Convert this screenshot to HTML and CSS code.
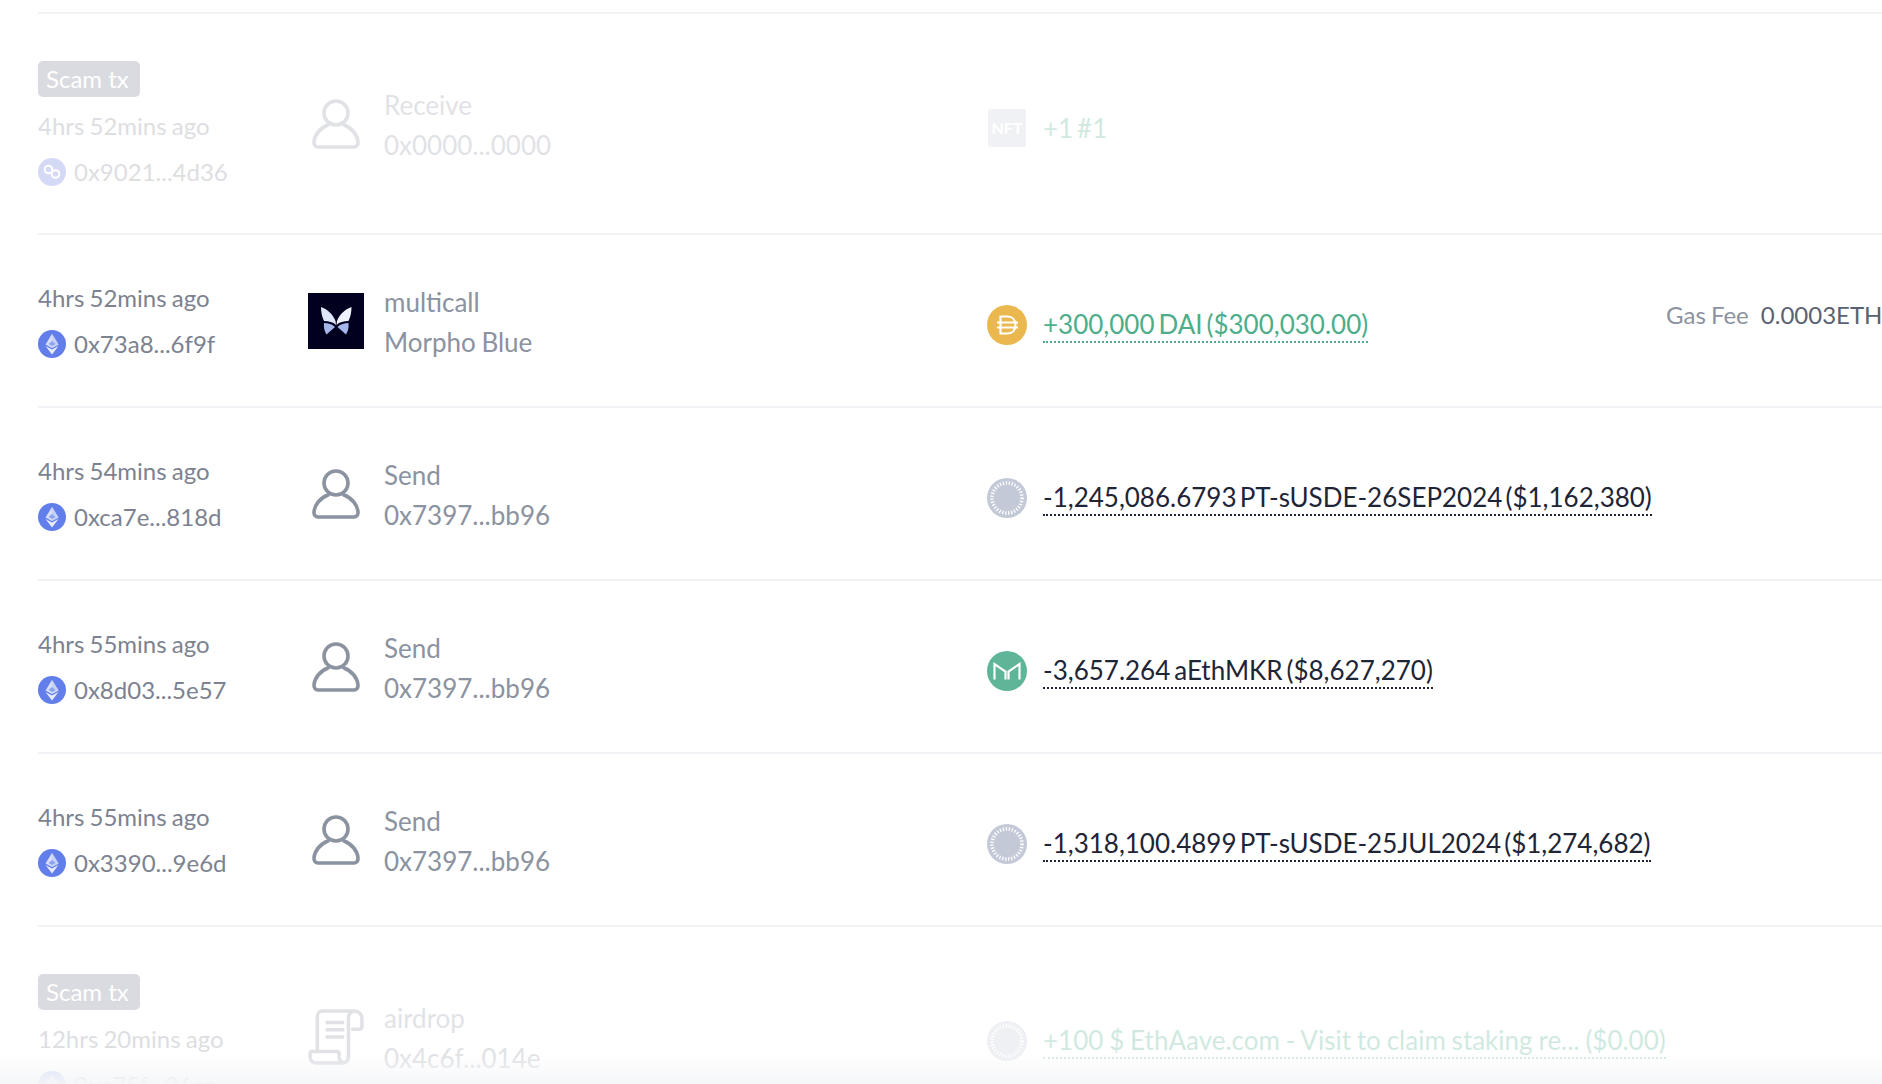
FILE: index.html
```html
<!DOCTYPE html>
<html lang="en">
<head>
<meta charset="utf-8">
<title>Transactions</title>
<link rel="stylesheet" href="styles.css">
</head>
<body>
<svg class="defs" width="0" height="0" aria-hidden="true">
  <symbol id="i-user" viewBox="0 0 48 50">
    <circle cx="24" cy="14" r="12" fill="none" stroke="currentColor" stroke-width="3.600"/>
    <path d="M16 26C8 29 2.500 36 2 43c-.2 3 1.500 5 4 5h36c2.500 0 4.200-2 4-5-.5-7-6-14-14-17" fill="none" stroke="currentColor" stroke-width="3.600" stroke-linecap="round"/>
  </symbol>
  <symbol id="i-scroll" viewBox="0 0 54 54">
    <path d="M9 41V7c0-3 2-5 5-5h31c4 0 7 3 7 7v8c0 1.500-1 2.500-2.500 2.500H43M43 2.500c-2.500 1-4 3-4 6V46c0 3.500-2.500 6-6 6H8c-3.500 0-6-2.500-6-6v-3c0-1.200 1-2 2-2h24c1.200 0 2 .8 2 2v2.500c0 3 1.500 5.500 4 6.500" fill="none" stroke="currentColor" stroke-width="3.400" stroke-linecap="round" stroke-linejoin="round"/>
    <path d="M17 13h18M17 20h18M17 27h18" stroke="currentColor" stroke-width="3.400"/>
  </symbol>
  <symbol id="i-eth" viewBox="0 0 28 28">
    <circle cx="14" cy="14" r="14" fill="#627eea"/>
    <path d="M14 4l-6.500 10.400L14 18l6.500-3.600z" fill="#fff" opacity=".75"/>
    <path d="M14 4v14l6.500-3.600z" fill="#c6d1f7"/>
    <path d="M14 19.600l-6.500-3.700L14 24.500l6.500-8.600z" fill="#fff" opacity=".85"/>
    <path d="M14 11l-3.500 3L14 16l3.500-2z" fill="#8ea3ee"/>
  </symbol>
  <symbol id="i-poly" viewBox="0 0 28 28">
    <circle cx="14" cy="14" r="14" fill="#5c6fe0"/>
    <circle cx="10.500" cy="11.500" r="3.800" fill="none" stroke="#fff" stroke-width="2"/>
    <circle cx="17.500" cy="16" r="3.800" fill="none" stroke="#fff" stroke-width="2"/>
  </symbol>
  <symbol id="i-dai" viewBox="0 0 40 40">
    <circle cx="20" cy="20" r="20" fill="#ebb84f"/>
    <path d="M13.500 11.500h7c5 0 8 3.500 8 8.500s-3 8.500-8 8.500h-7zM10 17.500h21M10 22.500h21" fill="none" stroke="#fff" stroke-width="2.200"/>
  </symbol>
  <symbol id="i-ring" viewBox="0 0 40 40">
    <circle cx="20" cy="20" r="20" fill="#c4c9d8"/>
    <circle cx="20" cy="20" r="15" fill="none" stroke="#fff" stroke-width="3.500" stroke-dasharray="1.300 1.700"/>
  </symbol>
  <symbol id="i-mkr" viewBox="0 0 40 40">
    <circle cx="20" cy="20" r="20" fill="#5fb597"/>
    <path d="M7.500 28.500V13L18.500 20.500V28.500M32.500 28.500V13L21.500 20.500V28.500" fill="none" stroke="#fff" stroke-width="2.200"/>
  </symbol>
</svg>

<main class="list">
  <section class="row scam">
    <div class="when">
      <span class="badge">Scam tx</span>
      <div class="faded"><div class="time">4hrs 52mins ago</div>
      <div class="hash"><svg class="chain"><use href="#i-poly"/></svg>0x9021...4d36</div></div>
    </div>
    <div class="action faded">
      <svg class="user"><use href="#i-user"/></svg>
      <div class="lines"><div>Receive</div><div>0x0000...0000</div></div>
    </div>
    <div class="change faded">
      <span class="nft">NFT</span>
      <span class="gain">+1 #1</span>
    </div>
  </section>

  <section class="row">
    <div class="when">
      <div class="time">4hrs 52mins ago</div>
      <div class="hash"><svg class="chain"><use href="#i-eth"/></svg>0x73a8...6f9f</div>
    </div>
    <div class="action">
      <svg class="morpho" viewBox="0 0 56 56">
        <rect width="56" height="56" fill="#01011f"/>
        <path d="M13 14c6 2 12 7 14.500 14l.5 4c-3-3-7-4-12-4-2-4-3-9-3-14z" fill="#dfe6fb"/>
        <path d="M43.500 14c-6 2-12 7-14.500 14l-.5 4c3-3 7-4 12-4 2-4 3-9 3-14z" fill="#eef3fd"/>
        <path d="M16 30c4 0 8 1 11 4l-8.500 7.500c-2-3-3-7-2.500-11.500zM40.500 30c-4 0-8 1-11 4l8.500 7.500c2-3 3-7 2.500-11.500z" fill="#a4b6ea"/>
      </svg>
      <div class="lines"><div>multicall</div><div>Morpho Blue</div></div>
    </div>
    <div class="change">
      <svg class="token"><use href="#i-dai"/></svg>
      <span class="amount gain">+300,000 DAI ($300,030.00)</span>
    </div>
    <div class="gas"><span class="gas-label">Gas Fee</span><span class="gas-value">0.0003ETH</span></div>
  </section>

  <section class="row">
    <div class="when">
      <div class="time">4hrs 54mins ago</div>
      <div class="hash"><svg class="chain"><use href="#i-eth"/></svg>0xca7e...818d</div>
    </div>
    <div class="action">
      <svg class="user"><use href="#i-user"/></svg>
      <div class="lines"><div>Send</div><div>0x7397...bb96</div></div>
    </div>
    <div class="change">
      <svg class="token"><use href="#i-ring"/></svg>
      <span class="amount pt">-1,245,086.6793 PT-sUSDE-26SEP2024 ($1,162,380)</span>
    </div>
  </section>

  <section class="row">
    <div class="when">
      <div class="time">4hrs 55mins ago</div>
      <div class="hash"><svg class="chain"><use href="#i-eth"/></svg>0x8d03...5e57</div>
    </div>
    <div class="action">
      <svg class="user"><use href="#i-user"/></svg>
      <div class="lines"><div>Send</div><div>0x7397...bb96</div></div>
    </div>
    <div class="change">
      <svg class="token"><use href="#i-mkr"/></svg>
      <span class="amount">-3,657.264 aEthMKR ($8,627,270)</span>
    </div>
  </section>

  <section class="row">
    <div class="when">
      <div class="time">4hrs 55mins ago</div>
      <div class="hash"><svg class="chain"><use href="#i-eth"/></svg>0x3390...9e6d</div>
    </div>
    <div class="action">
      <svg class="user"><use href="#i-user"/></svg>
      <div class="lines"><div>Send</div><div>0x7397...bb96</div></div>
    </div>
    <div class="change">
      <svg class="token"><use href="#i-ring"/></svg>
      <span class="amount pt">-1,318,100.4899 PT-sUSDE-25JUL2024 ($1,274,682)</span>
    </div>
  </section>

  <section class="row scam">
    <div class="when">
      <span class="badge">Scam tx</span>
      <div class="faded"><div class="time">12hrs 20mins ago</div>
      <div class="hash"><svg class="chain"><use href="#i-eth"/></svg>0xe75f...26ca</div></div>
    </div>
    <div class="action faded">
      <svg class="scroll"><use href="#i-scroll"/></svg>
      <div class="lines"><div>airdrop</div><div>0x4c6f...014e</div></div>
    </div>
    <div class="change faded">
      <svg class="token"><use href="#i-ring"/></svg>
      <span class="amount gain claim">+100 $ EthAave.com - Visit to claim staking re... ($0.00)</span>
    </div>
  </section>
</main>
<div class="fade-bottom"></div>
</body>
</html>
```

FILE: styles.css
```css
* { box-sizing: border-box; }
html, body { margin: 0; height: 100%; overflow: hidden; background: #fff; }
body { font-family: Lato, "Liberation Sans", sans-serif; color: #192945; }
.defs { position: absolute; }

.list { width: 2000px; margin-left: 38px; padding-top: 12px; }

.row {
  display: grid;
  grid-template-columns: 270px 679px 679px auto;
  align-items: center;
  height: 173px;
  border-top: 2px solid #f1f2f5;
}
.row.scam { height: 221px; }
.faded { opacity: .26; }

.when { display: flex; flex-direction: column; align-items: flex-start; font-size: 24px; color: #7c8290; word-spacing: -1px; }
.scam .when { padding-top: 8px; }
.badge {
  display: block;
  width: 102px;
  height: 36px;
  line-height: 36px;
  margin-bottom: 6px;
  padding-left: 8px;
  border-radius: 5px;
  background: #d9dbe0;
  color: #fff;
  font-size: 24px;
  word-spacing: 0;
}
.time { line-height: 46px; }
.hash { display: flex; align-items: center; gap: 8px; height: 46px; }
.chain { width: 28px; height: 28px; flex: none; }

.action { display: flex; align-items: center; gap: 20px; font-size: 26px; color: #8b92a0; word-spacing: -1px; }
.user { width: 56px; height: 56px; flex: none; padding: 3px; color: #8b92a0; }
.scroll { width: 56px; height: 56px; flex: none; color: #8b92a0; }
.morpho { width: 56px; height: 56px; flex: none; }
.lines { line-height: 40px; padding-top: 2px; }

.change { display: flex; align-items: center; gap: 16px; font-size: 26px; color: #1e2536; padding-top: 9px; word-spacing: -2.7px; white-space: nowrap; }
.token { width: 40px; height: 40px; flex: none; }
.amount { border-bottom: 2px dotted currentColor; line-height: 34px; }
.amount.pt { word-spacing: -3.5px; }
.amount.claim { word-spacing: -.8px; }
.gain { color: #4cae8a; }
.nft {
  display: block;
  width: 38px;
  margin: 0 1px;
  height: 38px;
  line-height: 38px;
  text-align: center;
  border-radius: 3px;
  background: #c9ccd6;
  color: #fff;
  font-size: 16px;
  font-weight: 700;
}

.gas { display: flex; gap: 12px; font-size: 24px; margin-top: -13px; white-space: nowrap; word-spacing: -1px; }
.gas-label { color: #8b92a0; }
.gas-value { color: #5a6272; }

.fade-bottom {
  position: fixed;
  left: 0;
  right: 0;
  bottom: 0;
  height: 30px;
  background: linear-gradient(rgba(245, 246, 248, 0), rgba(245, 246, 248, .9));
}
```
